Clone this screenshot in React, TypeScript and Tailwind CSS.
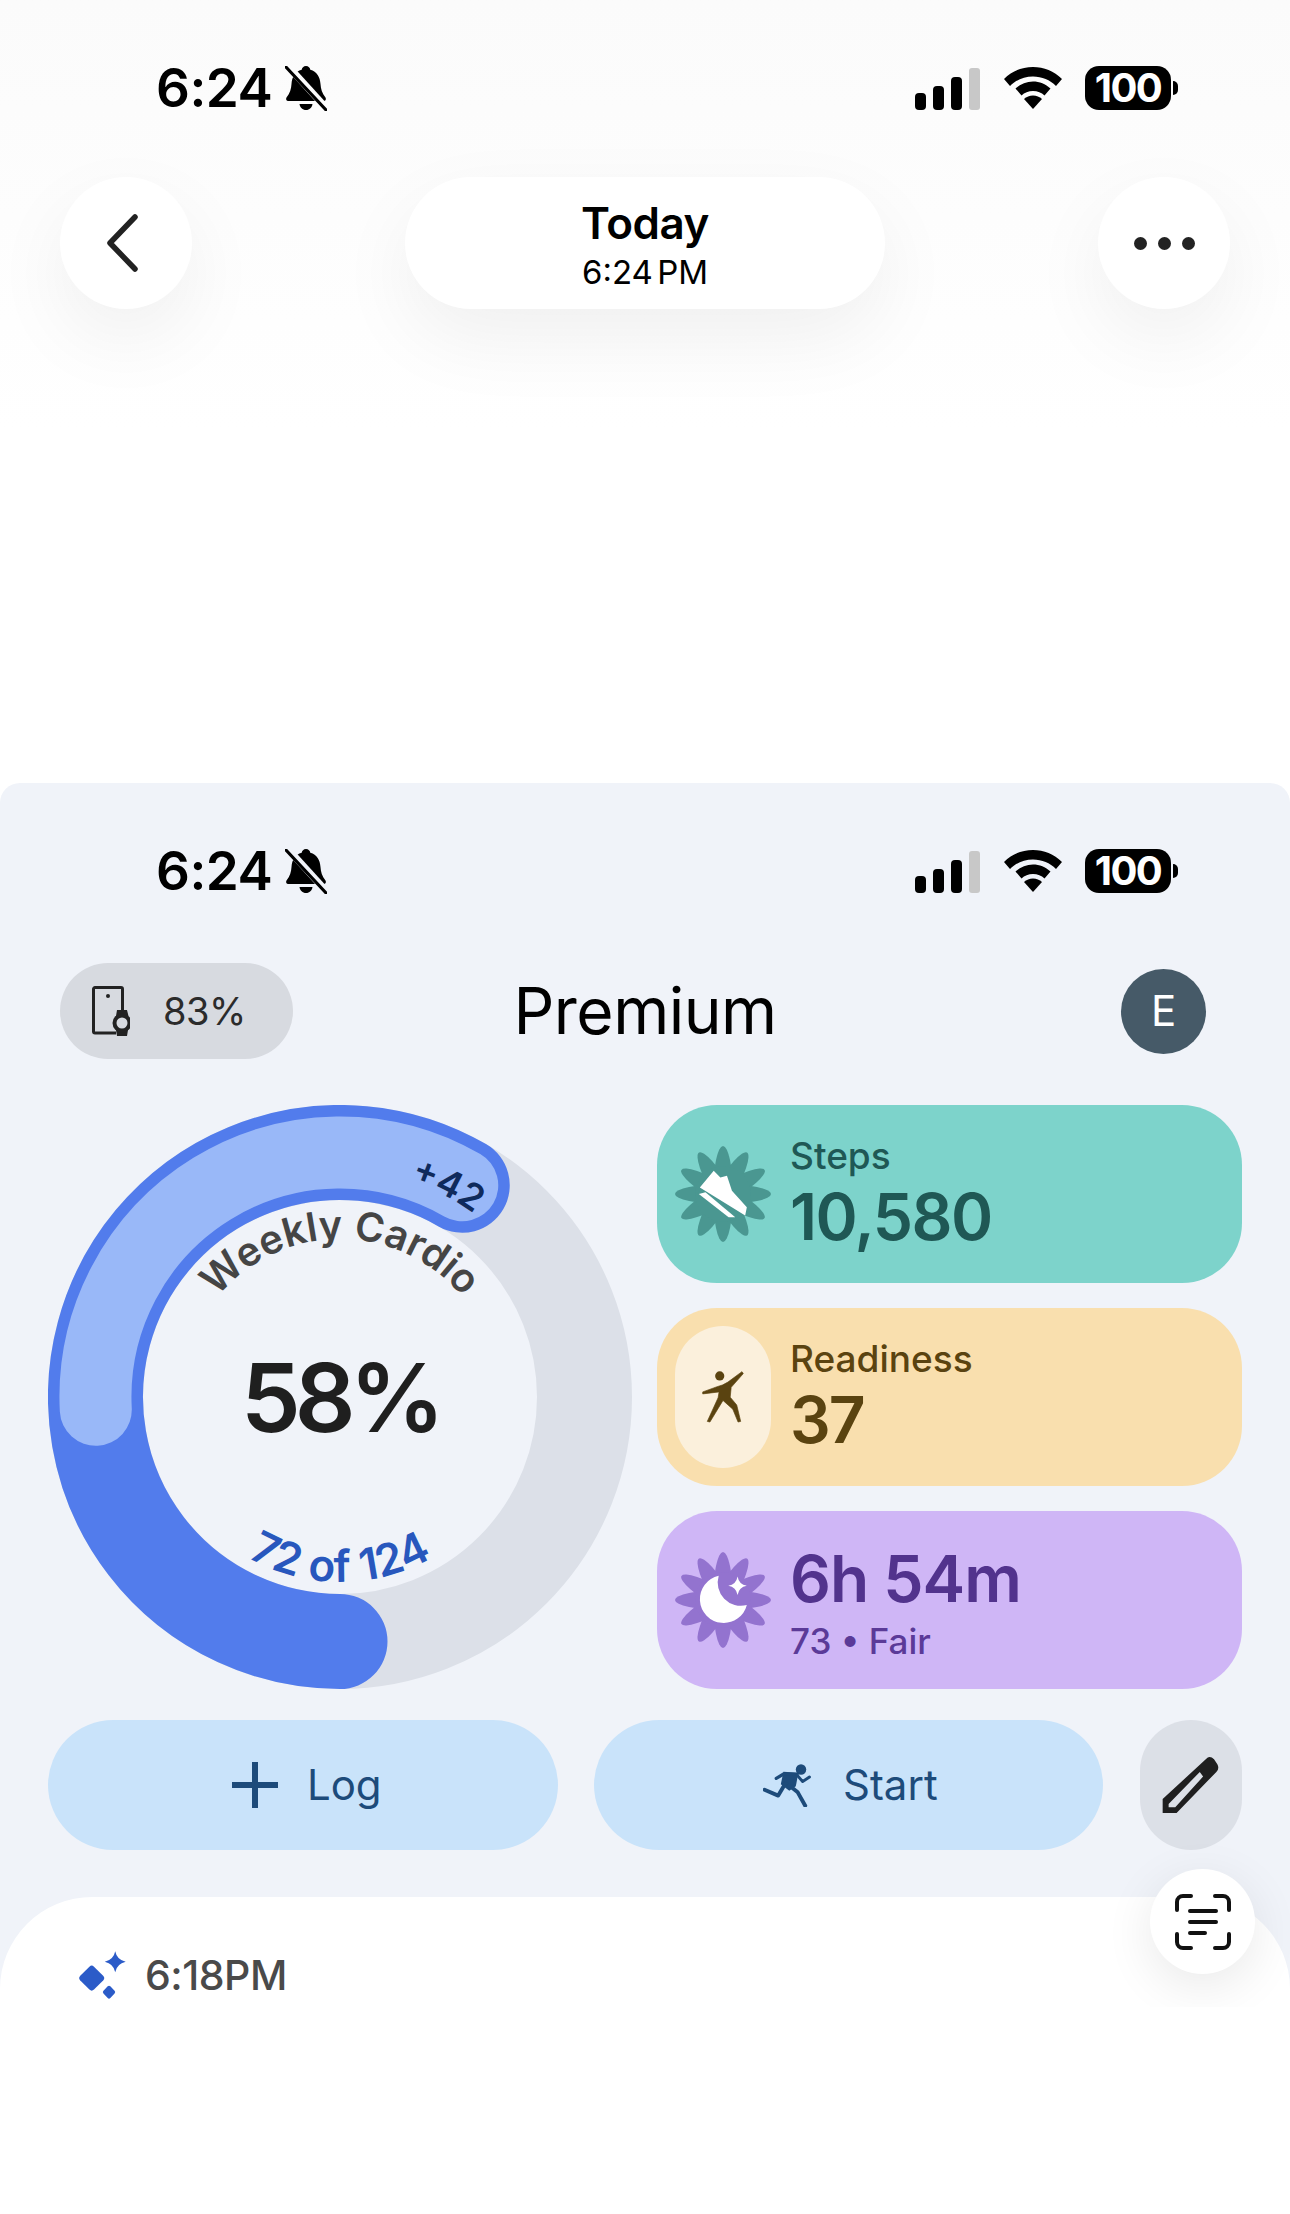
function BellSlash({ bg }: { bg: string }) {
  return (
    <svg width="42" height="45" viewBox="0 0 42 45">
      <path d="M21 0c2.500 0 4 1.800 4.300 3.700C32 5.500 35 11 35.500 18c.3 5 1.500 9 5 13.500.9 1.400.3 3.500-1.800 3.500H3.300C1.200 35 .6 32.900 1.500 31.500 5 27 6.200 23 6.500 18 7 11 10 5.500 16.700 3.700 17 1.800 18.500 0 21 0z" fill="#000" />
      <path d="M14.500 38h13c-.5 3.500-3 6-6.500 6s-6-2.500-6.500-6z" fill="#000" />
      <path d="M2 -1 L43 44" stroke={bg} strokeWidth="7" />
      <path d="M1 1 L41 44" stroke="#000" strokeWidth="3" strokeLinecap="round" />
    </svg>
  );
}

function StatusBar({ bg }: { bg: string }) {
  return (
    <div className="h-[176px] pl-[156px] pr-[112px] flex items-center justify-between shrink-0">
      <div className="flex items-center gap-[13px]">
        <span className="text-[53px] leading-none font-semibold text-black tracking-[-0.5px]">6:24</span>
        <BellSlash bg={bg} />
      </div>
      <div className="flex items-center">
        <svg width="66" height="42" viewBox="0 0 66 42" className="mt-[2px]">
          <rect x="0" y="25" width="11" height="17" rx="4" fill="#000" />
          <rect x="18" y="18" width="11" height="24" rx="4" fill="#000" />
          <rect x="36" y="9" width="11" height="33" rx="4" fill="#000" />
          <rect x="54" y="0" width="11" height="42" rx="3" fill="#c8c8c8" />
        </svg>
        <svg width="58" height="42" viewBox="0 0 58 42" className="ml-[23px]">
          <path d="M29 0c11 0 21 4 29 12l-6 7C46 13 38 9.500 29 9.500S12 13 6 19l-6-7C8 4 18 0 29 0z" fill="#000" />
          <path d="M29 14.500c6.500 0 12.500 2.500 17.500 7l-6 7c-3-2.800-7-4.500-11.500-4.500s-8.500 1.700-11.500 4.500l-6-7c5-4.500 11-7 17.500-7z" fill="#000" />
          <path d="M29 28.500c3.500 0 6.500 1.200 9 3.500l-9 10-9-10c2.500-2.300 5.500-3.500 9-3.500z" fill="#000" />
        </svg>
        <div className="ml-[23px] w-[86px] h-[44px] rounded-[14px] bg-black flex items-center justify-center">
          <span className="text-[40px] leading-none font-bold text-white tracking-[-1.5px]">100</span>
        </div>
        <div className="ml-[2px] w-[5px] h-[14px] rounded-r-full bg-black" />
      </div>
    </div>
  );
}

function Flower({ color, children }: { color: string; children: React.ReactNode }) {
  const angles = [0, 30, 60, 90, 120, 150];
  return (
    <svg width="96" height="96" viewBox="-145 -145 290 290" className="shrink-0">
      {angles.map((a) => (
        <ellipse key={a} cx="0" cy="0" rx="30" ry="145" fill={color} transform={`rotate(${a})`} />
      ))}
      <circle cx="0" cy="0" r="84" fill={color} />
      {children}
    </svg>
  );
}

function Ring() {
  return (
    <svg width="584" height="584" viewBox="0 0 584 584" className="shrink-0">
      <defs>
        <path id="weekly" d="M134 292 A158 158 0 0 1 450 292" />
        <path id="count" d="M107 292 A185 185 0 0 0 477 292" />
        <path id="plus" d="M65 292 A227 227 0 0 1 519 292" />
      </defs>
      <circle cx="292" cy="292" r="244.500" fill="none" stroke="#dce0e8" strokeWidth="95" />
      <path d="M414.250 80.260 A244.500 244.500 0 1 0 292 536.500" fill="none" stroke="#527cec" strokeWidth="95" strokeLinecap="round" />
      <path d="M414.250 80.260 A244.500 244.500 0 0 0 47.800 304.800" fill="none" stroke="#99b8f8" strokeWidth="72" strokeLinecap="round" />
      <text className="text-[40px] font-semibold fill-[#454545]" textAnchor="middle">
        <textPath href="#weekly" startOffset="50%">Weekly Cardio</textPath>
      </text>
      <text className="text-[44px] font-semibold fill-[#2857bd]" textAnchor="middle">
        <textPath href="#count" startOffset="50%">72 of 124</textPath>
      </text>
      <g transform="rotate(27 292 292)">
        <text className="text-[37px] font-semibold fill-[#0f2a5c]" textAnchor="middle">
          <textPath href="#plus" startOffset="50%">+42</textPath>
        </text>
      </g>
      <text x="292" y="327" textAnchor="middle" className="text-[95px] font-semibold fill-[#1f1f1f] tracking-[-6px]">58%</text>
    </svg>
  );
}

export default function App() {
  return (
    <div className="w-[1290px] h-[2214px] bg-white overflow-hidden flex flex-col font-['Inter','Liberation_Sans',sans-serif]">
      <header className="h-[783px] shrink-0 bg-gradient-to-b from-[#fbfbfb] to-white to-[55%]">
        <StatusBar bg="#fcfcfc" />
        <div className="flex items-center justify-between px-[60px] mt-[1px]">
          <div className="w-[132px] h-[132px] rounded-full bg-white shadow-[0_30px_80px_rgba(0,0,0,0.06)] flex items-center">
            <svg width="36" height="60" viewBox="0 0 36 60" className="ml-[44px]">
              <path d="M31 4 L6 30 L31 56" fill="none" stroke="#222" strokeWidth="5.500" strokeLinecap="round" strokeLinejoin="round" />
            </svg>
          </div>
          <div className="w-[480px] h-[132px] rounded-full bg-white shadow-[0_30px_80px_rgba(0,0,0,0.06)] flex flex-col items-center justify-center gap-[4px]">
            <span className="text-[44px] leading-[54px] font-semibold text-black tracking-[-0.5px]">Today</span>
            <span className="text-[33px] leading-[36px] text-black [word-spacing:-5px]">6:24 PM</span>
          </div>
          <div className="w-[132px] h-[132px] rounded-full bg-white shadow-[0_30px_80px_rgba(0,0,0,0.06)] flex items-center justify-center gap-[11px]">
            <span className="w-[13px] h-[13px] rounded-full bg-[#222]" />
            <span className="w-[13px] h-[13px] rounded-full bg-[#222]" />
            <span className="w-[13px] h-[13px] rounded-full bg-[#222]" />
          </div>
        </div>
      </header>

      <section className="h-[1224px] shrink-0 relative overflow-hidden rounded-t-[20px] bg-[#f0f3f9] flex flex-col">
        <StatusBar bg="#f0f3f9" />
        <div className="grid grid-cols-[1fr_auto_1fr] items-center px-[60px] mt-[4px] h-[96px] shrink-0">
          <div className="w-[233px] h-[96px] rounded-full bg-[#d7dae0] flex items-center pl-[32px] gap-[33px]">
            <svg width="38" height="50" viewBox="0 0 38 50" className="shrink-0">
              <path d="M24 47H3a1.500 1.500 0 0 1-1.500-1.500V3A1.500 1.500 0 0 1 3 1.500h26A1.500 1.500 0 0 1 30.500 3v22" fill="none" stroke="#222" strokeWidth="3" />
              <circle cx="16" cy="10" r="2" fill="#222" />
              <path d="M25 24h10l1.500 6H24zM24 44h12l-1 6H25z" fill="#222" />
              <circle cx="30" cy="37" r="7.500" fill="none" stroke="#222" strokeWidth="4" />
            </svg>
            <span className="text-[38px] leading-none text-[#2b2b2b] tracking-[-0.5px]">83%</span>
          </div>
          <h1 className="text-[64px] leading-none font-normal text-black tracking-[-0.5px]">Premium</h1>
          <div className="justify-self-end mr-[24px] w-[85px] h-[85px] rounded-full bg-[#465a68] flex items-center justify-center">
            <span className="text-[42px] leading-none text-white">E</span>
          </div>
        </div>

        <div className="flex pl-[48px] gap-[25px] mt-[46px] h-[584px] shrink-0">
          <Ring />
          <div className="w-[585px] flex flex-col gap-[25px]">
            <div className="flex-1 rounded-[60px] bg-[#7dd3cb] flex items-center pl-[18px] gap-[19px]">
              <Flower color="#4a9791">
                <path d="M-70 -20 L-28 -70 L-8 -50 L12 -55 L27 -10 L72 40 L67 65 Z" fill="#fff" />
                <path d="M-73 0 L-53 -5 L37 70 L17 70 Z" fill="#fff" />
              </Flower>
              <div className="flex flex-col gap-[6px] pb-[2px]">
                <span className="text-[37px] leading-[42px] font-medium text-[#1f5855]">Steps</span>
                <span className="text-[64px] leading-[68px] font-semibold text-[#1f5855] tracking-[-1.5px]">10,580</span>
              </div>
            </div>
            <div className="flex-1 rounded-[60px] bg-[#f9dfae] flex items-center pl-[18px] gap-[19px]">
              <div className="w-[96px] h-[142px] rounded-full bg-[#fbf0dc] flex items-center justify-center shrink-0">
                <svg width="44" height="54" viewBox="125 185 130 165">
                  <circle cx="180" cy="203" r="14" fill="#5a4310" />
                  <path d="M128 252 L172 236 Q190 232 205 222 L248 190 L252 196 L215 238 L212 268 L232 292 L244 342 L236 344 L220 305 L190 278 L150 344 L142 342 L175 270 L178 252 L128 258 Z" fill="#5a4310" stroke="#5a4310" strokeWidth="2" strokeLinejoin="round" />
                </svg>
              </div>
              <div className="flex flex-col gap-[6px] pb-[2px]">
                <span className="text-[37px] leading-[42px] font-medium text-[#5a4310]">Readiness</span>
                <span className="text-[64px] leading-[68px] font-semibold text-[#5a4310] tracking-[-2px]">37</span>
              </div>
            </div>
            <div className="flex-1 rounded-[60px] bg-[#cfb6f6] flex items-center pl-[18px] gap-[19px]">
              <Flower color="#9373cf">
                <path d="M-13 -73 A72 72 0 1 0 72 15 A70 70 0 0 1 -13 -73 Z" fill="#fff" />
                <path d="M44 -71 Q48 -47 72 -43 Q48 -39 44 -15 Q40 -39 16 -43 Q40 -47 44 -71 Z" fill="#fff" />
              </Flower>
              <div className="flex flex-col gap-[7px] pt-[6px]">
                <span className="text-[64px] leading-[68px] font-semibold text-[#52338d] tracking-[-1px]">6h 54m</span>
                <span className="text-[35px] leading-[42px] font-medium text-[#5b3a98]">73 • Fair</span>
              </div>
            </div>
          </div>
        </div>

        <div className="flex px-[48px] mt-[31px] h-[130px] shrink-0">
          <div className="w-[510px] h-[130px] rounded-full bg-[#c9e3fa] flex items-center justify-center gap-[29px] pl-[8px]">
            <svg width="46" height="46" viewBox="0 0 46 46">
              <path d="M23 0V46M0 23H46" stroke="#1d4b7a" strokeWidth="6" />
            </svg>
            <span className="text-[42px] leading-none text-[#1d4b7a]">Log</span>
          </div>
          <div className="w-[510px] h-[130px] rounded-full bg-[#c9e3fa] flex items-center justify-center gap-[32px] ml-[36px] pl-[4px]">
            <svg width="48" height="43" viewBox="44 68 146 132">
              <circle cx="160" cy="85" r="16" fill="#1d4b7a" />
              <path d="M106 92 L152 95 L144 136 L124 150 L98 130 Z" fill="#1d4b7a" />
              <path d="M84 112 L108 98 L148 100" fill="none" stroke="#1d4b7a" strokeWidth="10" strokeLinecap="round" strokeLinejoin="round" />
              <path d="M148 102 L165 122 L186 108" fill="none" stroke="#1d4b7a" strokeWidth="9" strokeLinecap="round" strokeLinejoin="round" />
              <path d="M112 128 L90 165 L48 147" fill="none" stroke="#1d4b7a" strokeWidth="12" strokeLinecap="round" strokeLinejoin="round" />
              <path d="M125 135 L150 155 L173 196" fill="none" stroke="#1d4b7a" strokeWidth="12" strokeLinecap="round" strokeLinejoin="round" />
            </svg>
            <span className="text-[42px] leading-none text-[#1d4b7a]">Start</span>
          </div>
          <div className="w-[102px] h-[130px] rounded-full bg-[#dce0e7] flex items-center justify-center ml-[37px]">
            <svg width="58" height="58" viewBox="1238 50 175 175">
              <path fillRule="evenodd" d="M1240 222 L1240 180 L1375 55 Q1385 50 1395 60 L1405 75 Q1412 88 1402 98 L1282 222 Z M1258 195 L1258 205 L1278 205 L1362 112 L1352 98 Z" fill="#1f1f1f" />
            </svg>
          </div>
        </div>

        <div className="flex-1 mt-[47px] bg-white rounded-t-[92px] pl-[77px] pt-[54px]">
          <div className="flex items-center gap-[19px]">
            <svg width="49" height="49" viewBox="50 35 150 150" className="shrink-0">
              <path d="M88 83 Q95 76 102 83 L130 111 Q137 118 130 125 L102 153 Q95 160 88 153 L60 125 Q53 118 60 111 Z" fill="#2b5bc8" />
              <path d="M167 36 Q172 62 199 68 Q172 74 167 100 Q162 74 135 68 Q162 62 167 36 Z" fill="#2b5bc8" />
              <path d="M144 143 Q148 139 152 143 L165 157 Q169 161 165 165 L152 179 Q148 183 144 179 L131 165 Q127 161 131 157 Z" fill="#2b5bc8" />
            </svg>
            <span className="text-[41px] leading-none font-medium text-[#4a4a4a] tracking-[-0.5px]">6:18PM</span>
          </div>
        </div>

        <div className="absolute left-[1150px] top-[1086px] w-[105px] h-[105px] rounded-full bg-white shadow-[0_12px_50px_rgba(0,0,0,0.09)] flex items-center justify-center">
          <svg width="56" height="56" viewBox="0 0 56 56">
            <path d="M2 16V8a6 6 0 0 1 6-6h8M40 2h8a6 6 0 0 1 6 6v8M54 40v8a6 6 0 0 1-6 6h-8M16 54H8a6 6 0 0 1-6-6v-8" fill="none" stroke="#111" strokeWidth="4" strokeLinecap="round" />
            <path d="M15 17H41M15 28H41M15 39H30" stroke="#111" strokeWidth="4" strokeLinecap="round" />
          </svg>
        </div>
      </section>
    </div>
  );
}
